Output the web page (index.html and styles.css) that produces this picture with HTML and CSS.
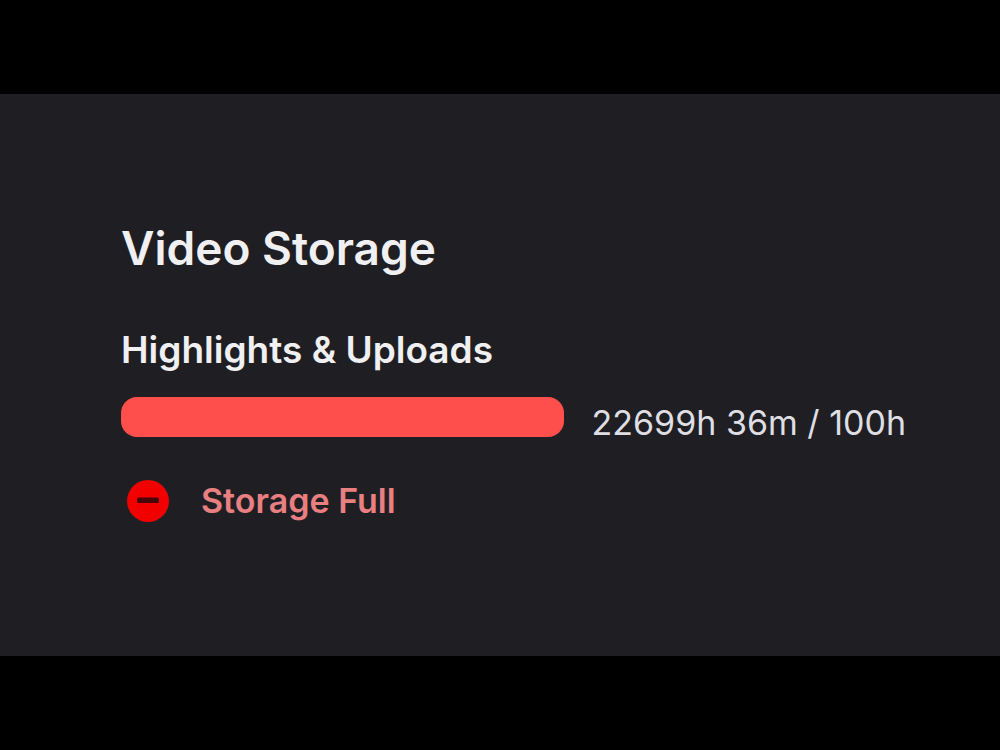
FILE: index.html
```html
<!DOCTYPE html>
<html lang="en">
<head>
    <meta charset="UTF-8">
    <meta name="viewport" content="width=device-width, initial-scale=1" />
    <title>Video Storage</title>
    <link rel="stylesheet" href="styles.css">
</head>
<body>
    <main class="storage">
        <h1>Video Storage</h1>
        <h2 id="usage-label">Highlights &amp; Uploads</h2>
        <div class="usage">
            <div class="bar" role="progressbar" aria-labelledby="usage-label" aria-valuemin="0" aria-valuemax="100" aria-valuenow="100">
                <div class="bar-fill" style="width: 100%"></div>
            </div>
            <span class="amount">22699h 36m / 100h</span>
        </div>
        <div class="status">
            <svg class="status-icon" viewBox="0 0 42 42" aria-hidden="true">
                <circle cx="21" cy="21" r="21" fill="#f20000" />
                <rect x="10" y="17.5" width="22" height="5.5" rx="1.5" fill="#4a0508" />
            </svg>
            <span>Storage Full</span>
        </div>
    </main>
</body>
</html>
```

FILE: styles.css
```css
body {
    font-family: Inter, "Liberation Sans", sans-serif;
    margin: 0;
    min-height: 100vh;
    display: flex;
    align-items: center;
    background-color: #000;
    color: #f0eff2;
}

.storage {
    box-sizing: border-box;
    width: 100%;
    padding: 127px 94px 133px 121px;
    background-color: #1f1f23;
}

h1 {
    margin: 0 0 52px;
    font-size: 46px;
    line-height: 54px;
    font-weight: 600;
}

h2 {
    margin: 0 0 24px;
    font-size: 37px;
    line-height: 46px;
    font-weight: 600;
}

.usage {
    display: flex;
    align-items: flex-start;
    gap: 28px;
    margin-bottom: 30px;
}

.bar {
    flex: 1;
    height: 40px;
    border-radius: 16px;
    overflow: hidden;
    background-color: #3a3a3d;
}

.bar-fill {
    height: 100%;
    background-color: #ff4f4d;
}

.amount {
    font-size: 34px;
    line-height: 52px;
    white-space: nowrap;
    color: #dedee3;
}

.status {
    display: flex;
    align-items: center;
    gap: 32px;
    padding-left: 6px;
    font-size: 34px;
    line-height: 44px;
    font-weight: 600;
    color: #e97f80;
}

.status-icon {
    width: 42px;
    height: 42px;
}
```
